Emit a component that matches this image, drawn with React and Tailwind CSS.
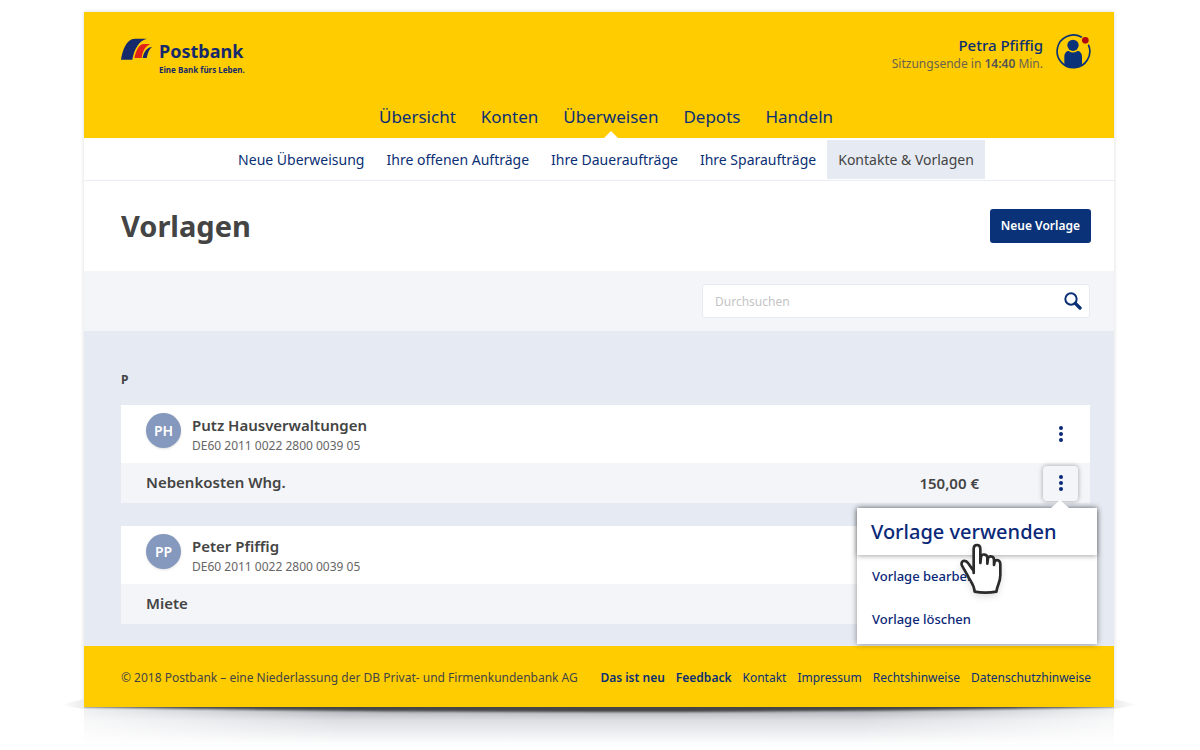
import React, { useState } from 'react';

const mainNav = ['Übersicht', 'Konten', 'Überweisen', 'Depots', 'Handeln'];

const subNav = [
  'Neue Überweisung',
  'Ihre offenen Aufträge',
  'Ihre Daueraufträge',
  'Ihre Sparaufträge',
  'Kontakte & Vorlagen',
];

const footerLinks = [
  { label: 'Das ist neu', bold: true },
  { label: 'Feedback', bold: true },
  { label: 'Kontakt' },
  { label: 'Impressum' },
  { label: 'Rechtshinweise' },
  { label: 'Datenschutzhinweise' },
];

const contacts = [
  {
    initials: 'PH',
    name: 'Putz Hausverwaltungen',
    iban: 'DE60 2011 0022 2800 0039 05',
    template: 'Nebenkosten Whg.',
    amount: '150,00 €',
    menuOpen: true,
  },
  {
    initials: 'PP',
    name: 'Peter Pfiffig',
    iban: 'DE60 2011 0022 2800 0039 05',
    template: 'Miete',
    amount: '',
    menuOpen: false,
  },
];

const Logo = () => (
  <a href="#start" className="flex gap-[7px] text-[#15296b]">
    <svg className="h-[22px] w-[31px]" viewBox="0 0 93 66">
      <path d="M0 65 C3 44 12 18 24 9 Q32 2 42 2 H78 C54 8 40 32 34 65 Z" fill="#15296b" />
      <path d="M40 60 C44 42 52 18 70 18 H88 C72 24 64 42 62 60 Z" fill="#e2231a" />
      <path d="M65 60 C68 42 78 28 93 27 C84 34 80 46 77 60 Z" fill="#15296b" />
    </svg>
    <span className="flex flex-col">
      <span className="text-[18px] leading-[26px] font-bold">Postbank</span>
      <span className="text-[8px] leading-3 font-bold">Eine Bank fürs Leben.</span>
    </span>
  </a>
);

const ProfileIcon = () => (
  <svg className="h-[35px] w-[35px]" viewBox="0 0 105 105">
    <path
      d="M76 9 A49 49 0 1 0 98 34"
      fill="none"
      stroke="#0a3278"
      strokeWidth="5"
      strokeLinecap="round"
    />
    <circle cx="51" cy="34" r="17" fill="#0a3278" />
    <path d="M25 92 V68 C25 57 32 51 38 51 Q51 60 64 51 C71 51 78 57 78 68 V92 Q51 110 25 92 Z" fill="#0a3278" />
    <circle cx="88" cy="19" r="10" fill="#b3090f" />
  </svg>
);

const SearchIcon = () => (
  <svg className="h-[18px] w-[18px]" viewBox="0 0 54 54">
    <circle cx="21" cy="21" r="17" fill="none" stroke="#0a2f74" strokeWidth="6" />
    <path d="M34 34 L48 48" stroke="#0a2f74" strokeWidth="10" strokeLinecap="round" />
  </svg>
);

const Dots = () => (
  <svg className="h-4 w-1" viewBox="0 0 4 16" fill="#0a2878">
    <circle cx="2" cy="2" r="2" />
    <circle cx="2" cy="8" r="2" />
    <circle cx="2" cy="14" r="2" />
  </svg>
);

// Hand pointer over the context menu
const HandPointer = () => (
  <svg
    className="pointer-events-none absolute top-[35px] left-[103px] h-[54px] w-[43px] drop-shadow-md"
    viewBox="0 0 129 162"
  >
    <path
      d="M41 90 L41 18 C41 2 61 2 61 18 L61 60 L63 42 C66 30 82 34 82 44 L82 62 L84 46 C88 36 102 40 102 50 L102 66 L104 56 C108 48 121 50 121 64 L121 96 C121 118 113 122 109 146 Q75 152 44 146 C42 122 31 116 21 94 L6 68 C0 54 16 48 24 60 L41 84"
      fill="#fff"
      stroke="#2b2b2b"
      strokeWidth="8"
      strokeLinejoin="round"
      strokeLinecap="round"
    />
  </svg>
);

const ContextMenu = () => (
  <div className="absolute top-[42px] -right-[19px] z-10 w-60 bg-white text-[13px] font-medium text-[#0a2878] shadow-[0_0_6px_rgba(0,0,0,0.45)]">
    <svg className="absolute -top-2 right-7 h-2 w-[18px]" viewBox="0 0 18 8">
      <path d="M0 8 L9 0 L18 8 Z" fill="#fff" />
    </svg>
    <button
      type="button"
      className="block h-[47px] w-full px-[14px] pt-[2px] text-left text-[20px] shadow-[0_1px_5px_rgba(0,0,0,0.35)]"
    >
      Vorlage verwenden
    </button>
    <button type="button" className="block h-11 w-full px-[15px] text-left">
      Vorlage bearbeiten
    </button>
    <button type="button" className="mb-[2px] block h-[43px] w-full px-[15px] text-left">
      Vorlage löschen
    </button>
    <HandPointer />
  </div>
);

const ContactCard = ({ contact }) => (
  <section className="bg-white">
    <div className="flex h-[58px] items-center pr-3 pl-[25px]">
      <div className="mb-2 flex h-[35px] w-[35px] items-center justify-center rounded-full bg-[#8598bd] text-[14px] font-semibold text-white shadow">
        {contact.initials}
      </div>
      <div className="ml-[11px] flex-1 pt-[2px]">
        <h3 className="text-[15px] leading-[21px] font-semibold text-[#444]">{contact.name}</h3>
        <p className="text-[12px] leading-5 text-[#666]">{contact.iban}</p>
      </div>
      <button
        type="button"
        aria-label={`Optionen ${contact.name}`}
        className="flex h-[35px] w-[35px] items-center justify-center"
      >
        <Dots />
      </button>
    </div>
    <div className="flex h-10 items-center bg-[#f3f5f9] pr-3 pl-[25px] text-[15px] font-semibold text-[#444]">
      <span className="flex-1 pb-[2px]">{contact.template}</span>
      <span className="mr-16">{contact.amount}</span>
      <div className="relative">
        <button
          type="button"
          aria-label={`Optionen ${contact.template}`}
          className={
            contact.menuOpen
              ? 'flex h-[35px] w-[35px] items-center justify-center rounded bg-[#f3f5f9] shadow-[0_0_5px_rgba(0,0,0,0.35)]'
              : 'flex h-[35px] w-[35px] items-center justify-center'
          }
        >
          <Dots />
        </button>
        {contact.menuOpen && <ContextMenu />}
      </div>
    </div>
  </section>
);

// Curved shadow under the page
const PageShadow = () => (
  <svg className="-mx-6 -mt-2 block h-[50px] w-[calc(100%+48px)]" viewBox="0 0 1078 50" preserveAspectRatio="none">
    <defs>
      <linearGradient id="soft" x1="0" y1="0" x2="0" y2="1">
        <stop offset="0" stopColor="#a3a8b0" />
        <stop offset="0.35" stopColor="#dcdee2" />
        <stop offset="1" stopColor="#fff" />
      </linearGradient>
      <linearGradient id="sides" x1="0" y1="0" x2="1" y2="0">
        <stop offset="0" stopColor="#fff" stopOpacity="0.8" />
        <stop offset="0.25" stopColor="#fff" stopOpacity="0" />
        <stop offset="0.75" stopColor="#fff" stopOpacity="0" />
        <stop offset="1" stopColor="#fff" stopOpacity="0.8" />
      </linearGradient>
      <linearGradient id="tipLeft" x1="0" y1="0" x2="1" y2="0">
        <stop offset="0" stopColor="#fff" />
        <stop offset="1" stopColor="#ebebeb" />
      </linearGradient>
      <linearGradient id="tipRight" x1="1" y1="0" x2="0" y2="0">
        <stop offset="0" stopColor="#fff" />
        <stop offset="1" stopColor="#ebebeb" />
      </linearGradient>
      <filter id="blur" x="-5%" y="-100%" width="110%" height="300%">
        <feGaussianBlur stdDeviation="1" />
      </filter>
      <clipPath id="below">
        <rect x="24" y="8" width="1030" height="42" />
      </clipPath>
    </defs>
    <path d="M0 6 L24 0 V10 Z" fill="url(#tipLeft)" />
    <path d="M1078 6 L1054 0 V10 Z" fill="url(#tipRight)" />
    <rect x="24" y="8" width="1030" height="38" fill="url(#soft)" />
    <rect x="24" y="8" width="1030" height="38" fill="url(#sides)" />
    <g clipPath="url(#below)">
      <path d="M24 0 H1054 V8 Q800 13 539 13 Q278 13 24 8 Z" fill="#444" filter="url(#blur)" />
    </g>
  </svg>
);

export default function App() {
  const [search, setSearch] = useState('');

  return (
    <div className="bg-white pt-3 pr-[86px] pl-[84px] font-['Noto_Sans','Open_Sans',sans-serif]">
      <div className="shadow-[0_0_4px_rgba(0,0,0,0.15)]">
        {/* Header */}
        <header className="flex h-[126px] flex-col justify-between bg-[#ffcc00] text-[#0a2f74]">
          <div className="flex justify-between pt-[22px] pr-[23px] pl-[37px]">
            <div className="pt-1">
              <Logo />
            </div>
            <div className="flex items-start gap-[13px]">
              <div className="text-right">
                <p className="text-[15px] leading-[22px] font-medium">Petra Pfiffig</p>
                <p className="text-[12px] leading-4 text-[#6b6350]">
                  Sitzungsende in <strong className="font-semibold text-[#555]">14:40</strong> Min.
                </p>
              </div>
              <button type="button" aria-label="Profil">
                <ProfileIcon />
              </button>
            </div>
          </div>
          <nav className="flex justify-center gap-[25px] pl-[14px] text-[17px]">
            {mainNav.map((item) => (
              <a key={item} href="#nav" className="relative h-[34px] leading-[26px]">
                {item}
                {item === 'Überweisen' && (
                  <svg className="absolute bottom-0 left-1/2 h-[7px] w-[14px] -translate-x-1/2" viewBox="0 0 14 7">
                    <path d="M0 7 L7 0 L14 7 Z" fill="#fff" />
                  </svg>
                )}
              </a>
            ))}
          </nav>
        </header>

        {/* Sub navigation */}
        <nav className="flex h-[43px] items-center justify-center border-b border-[#e9ecf3] bg-white pl-[14px] text-[14px] text-[#0a2f74]">
          {subNav.map((item) => (
            <a
              key={item}
              href="#subnav"
              className={
                item === 'Kontakte & Vorlagen'
                  ? 'bg-[#e6eaf2] px-[11px] leading-[39px] text-[#444]'
                  : 'px-[11px] leading-[39px]'
              }
            >
              {item}
            </a>
          ))}
        </nav>

        {/* Title */}
        <div className="flex h-[90px] items-center justify-between bg-white pr-[23px] pl-[37px]">
          <h1 className="text-[29px] font-bold text-[#444]">Vorlagen</h1>
          <button
            type="button"
            className="h-[34px] rounded-[3px] bg-[#0a3278] px-[11px] text-[12px] font-semibold text-white"
          >
            Neue Vorlage
          </button>
        </div>

        {/* Search */}
        <div className="flex h-[60px] items-center justify-end bg-[#f3f5f9] pr-6">
          <div className="flex h-[34px] w-[388px] items-center rounded-[3px] border border-[#e6eaf2] bg-white pr-[7px] pl-3">
            <input
              type="text"
              aria-label="Durchsuchen"
              placeholder="Durchsuchen"
              className="min-w-0 flex-1 pt-px text-[12px] text-[#444] outline-none placeholder:text-[#c4c4c4]"
              value={search}
              onChange={(e) => setSearch(e.target.value)}
            />
            <button type="button" aria-label="Suchen">
              <SearchIcon />
            </button>
          </div>
        </div>

        {/* Contact list */}
        <main className="bg-[#e6eaf2] pt-[39px] pr-6 pb-[22px] pl-[37px]">
          <h2 className="mb-[15px] text-[12px] leading-5 font-bold text-[#444]">P</h2>
          <div className="flex flex-col gap-[23px]">
            {contacts.map((contact) => (
              <ContactCard key={contact.name} contact={contact} />
            ))}
          </div>
        </main>

        {/* Footer */}
        <footer className="flex h-[61px] items-center justify-between bg-[#ffcc00] pt-[2px] pr-[23px] pl-[37px] text-[12px]">
          <p className="text-[#444]">
            © 2018 Postbank – eine Niederlassung der DB Privat- und Firmenkundenbank AG
          </p>
          <nav className="flex gap-[11px] text-[#0a2f74]">
            {footerLinks.map((link) => (
              <a key={link.label} href="#footer" className={link.bold ? 'font-semibold' : undefined}>
                {link.label}
              </a>
            ))}
          </nav>
        </footer>
      </div>
      <PageShadow />
    </div>
  );
}
